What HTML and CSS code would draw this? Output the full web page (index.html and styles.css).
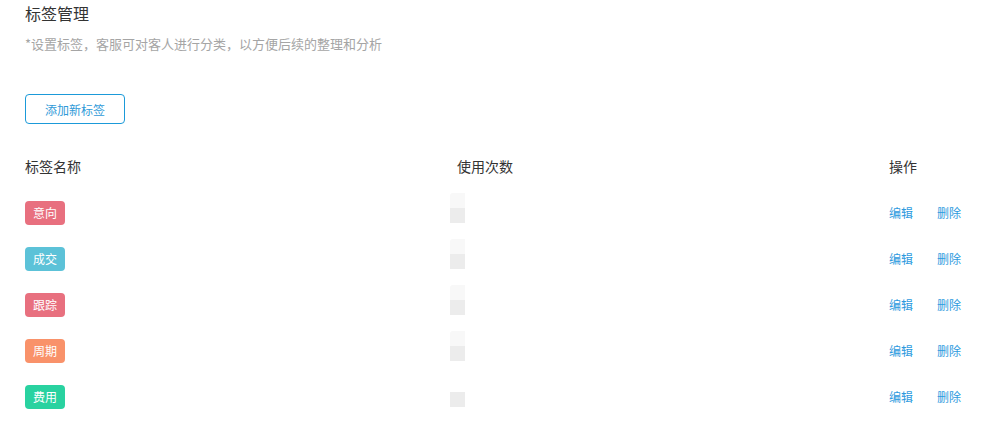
FILE: index.html
```html
<!DOCTYPE html>
<html lang="zh-CN">
<head>
  <meta charset="UTF-8" />
  <meta name="viewport" content="width=device-width, initial-scale=1" />
  <title>标签管理</title>
  <link rel="stylesheet" href="styles.css">
</head>
<body>
  <header class="page-head">
    <h1>标签管理</h1>
    <p class="hint">*设置标签，客服可对客人进行分类，以方便后续的整理和分析</p>
  </header>

  <button class="add-btn">添加新标签</button>

  <div class="tag-table">
    <div class="row head">
      <div class="col-name">标签名称</div>
      <div class="col-count">使用次数</div>
      <div class="col-ops">操作</div>
    </div>
    <div class="row">
      <div class="col-name"><span class="tag red">意向</span></div>
      <div class="col-count"><span class="count"><i class="light"></i><i class="dark"></i></span></div>
      <div class="col-ops"><a href="#">编辑</a><a href="#">删除</a></div>
    </div>
    <div class="row">
      <div class="col-name"><span class="tag cyan">成交</span></div>
      <div class="col-count"><span class="count"><i class="light"></i><i class="dark"></i></span></div>
      <div class="col-ops"><a href="#">编辑</a><a href="#">删除</a></div>
    </div>
    <div class="row">
      <div class="col-name"><span class="tag red">跟踪</span></div>
      <div class="col-count"><span class="count"><i class="light"></i><i class="dark"></i></span></div>
      <div class="col-ops"><a href="#">编辑</a><a href="#">删除</a></div>
    </div>
    <div class="row">
      <div class="col-name"><span class="tag orange">周期</span></div>
      <div class="col-count"><span class="count"><i class="light"></i><i class="dark"></i></span></div>
      <div class="col-ops"><a href="#">编辑</a><a href="#">删除</a></div>
    </div>
    <div class="row">
      <div class="col-name"><span class="tag green">费用</span></div>
      <div class="col-count"><span class="count"><i class="blank"></i><i class="dark"></i></span></div>
      <div class="col-ops"><a href="#">编辑</a><a href="#">删除</a></div>
    </div>
  </div>
</body>
</html>
```

FILE: styles.css
```css
body {
  font-family: "Noto Sans CJK SC", "Noto Sans", sans-serif;
  background-color: #fff;
  color: #333;
  margin: 0;
  padding: 0 0 0 25px;
}
.page-head h1 {
  font-size: 16px;
  font-weight: normal;
  line-height: 26px;
  margin: 0;
  color: #333;
}
.hint {
  font-size: 13px;
  line-height: 20px;
  margin: 8px 0 0;
  color: #a5a5a5;
}
.add-btn {
  display: block;
  margin-top: 40px;
  width: 100px;
  height: 30px;
  padding: 0;
  font-family: inherit;
  font-size: 12px;
  color: #2f9ad8;
  background: #fff;
  border: 1px solid #1b9ad9;
  border-radius: 4px;
  cursor: pointer;
}
.tag-table {
  margin-top: 32px;
}
.row {
  display: flex;
  align-items: center;
  height: 46px;
}
.row.head {
  height: 20px;
  font-size: 14px;
  line-height: 20px;
  margin-bottom: 13px;
}
.col-name {
  width: 425px;
}
.col-count {
  width: 439px;
}
.head .col-count {
  padding-left: 7px;
  box-sizing: border-box;
}
.row:not(.head) .col-count {
  align-self: flex-start;
  padding-top: 4px;
}
.count {
  display: block;
  width: 15px;
}
.count i {
  display: block;
  height: 15px;
}
.count .light {
  background: #f8f8f8;
  border-top-left-radius: 3px;
}
.count .dark {
  background: #ececec;
}
.tag {
  display: inline-block;
  width: 40px;
  height: 24px;
  line-height: 24px;
  text-align: center;
  font-size: 12px;
  color: #fff;
  border-radius: 4px;
  vertical-align: middle;
}
.tag.red {
  background: #e8707f;
}
.tag.cyan {
  background: #5cc2d8;
}
.tag.orange {
  background: #f9926a;
}
.tag.green {
  background: #29d2a0;
}
.col-ops {
  display: flex;
  gap: 24px;
  font-size: 12px;
}
.head .col-ops {
  font-size: 14px;
}
.col-ops a {
  color: #2d9ade;
  text-decoration: none;
}
.col-ops a:hover {
  text-decoration: underline;
}
```
